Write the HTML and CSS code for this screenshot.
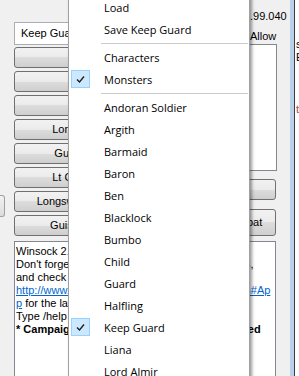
FILE: index.html
```html
<!DOCTYPE html>
<html lang="en">
<head>
<meta charset="UTF-8">
<meta name="viewport" content="width=device-width, initial-scale=1.0">
<title>Campaign Manager</title>
<link rel="stylesheet" href="styles.css">
</head>
<body>
<div class="window">
    <div class="edge">
        <div class="nub"></div>
    </div>
    <div class="main">
        <div class="top">
            <div class="left-col">
                <div class="name">Keep Guard</div>
                <div class="btns">
                    <div class="btn">Orc</div>
                    <div class="btn">Ent</div>
                    <div class="btn">Elf</div>
                    <div class="btn">Lord Almir</div>
                    <div class="btn">Guardian</div>
                    <div class="btn">Lt Colonel</div>
                    <div class="btn">Longswordsman</div>
                    <div class="btn">Guisarmier</div>
                </div>
            </div>
            <div class="right-col">
                <div class="label">.99.040</div>
                <div class="label label-allow">Allow</div>
                <div class="list"></div>
                <div class="btn btn-roll">Roll</div>
                <div class="btn-row">
                    <div class="btn btn-tall">Attack</div>
                    <div class="btn btn-tall btn-combat">Combat</div>
                </div>
            </div>
        </div>
        <div class="log">
            <div class="line">Winsock 2.2 initialized.</div>
            <div class="line">Don't forget to visit the Campaign Manager sites,</div>
            <div class="line">and check the forums regularly at</div>
            <div class="line"><a href="#">http://www.campaignmanager.com/Versions.htm#Ap</a></div>
            <div class="line"><a href="#">p</a> for the latest news and updates.</div>
            <div class="line">Type /help for a list of commands.</div>
            <div class="line bold">* Campaign Logging and Auto-Save is Enabled</div>
        </div>
    </div>
    <div class="gutter"></div>
    <div class="frame"></div>
    <div class="other">
        <div class="row">s</div>
        <div class="row">E</div>
        <div class="row"></div>
        <div class="row"></div>
        <div class="row"></div>
        <div class="row brown">t</div>
    </div>
</div>

<div class="menu">
    <div class="item"><span class="mark"></span>Load</div>
    <div class="item"><span class="mark"></span>Save Keep Guard</div>
    <div class="sep"></div>
    <div class="item"><span class="mark"></span>Characters</div>
    <div class="item"><span class="mark on"><svg width="17" height="16" viewBox="0 0 17 16"><path d="M5 8.5 L7.5 11 L12 5.5" fill="none" stroke="#1a1a1a" stroke-width="1.3"/></svg></span>Monsters</div>
    <div class="sep"></div>
    <div class="item"><span class="mark"></span>Andoran Soldier</div>
    <div class="item"><span class="mark"></span>Argith</div>
    <div class="item"><span class="mark"></span>Barmaid</div>
    <div class="item"><span class="mark"></span>Baron</div>
    <div class="item"><span class="mark"></span>Ben</div>
    <div class="item"><span class="mark"></span>Blacklock</div>
    <div class="item"><span class="mark"></span>Bumbo</div>
    <div class="item"><span class="mark"></span>Child</div>
    <div class="item"><span class="mark"></span>Guard</div>
    <div class="item"><span class="mark"></span>Halfling</div>
    <div class="item"><span class="mark on"><svg width="17" height="16" viewBox="0 0 17 16"><path d="M5 8.5 L7.5 11 L12 5.5" fill="none" stroke="#1a1a1a" stroke-width="1.3"/></svg></span>Keep Guard</div>
    <div class="item"><span class="mark"></span>Liana</div>
    <div class="item"><span class="mark"></span>Lord Almir</div>
</div>
</body>
</html>
```
FILE: styles.css
```css
body {
    margin: 0;
    width: 299px;
    height: 376px;
    overflow: hidden;
    position: relative;
    background-color: #f0f0f0;
    font-family: "Liberation Sans", Arial, sans-serif;
    font-size: 11px;
    color: #000;
}

.window {
    display: flex;
    height: 376px;
}

.edge {
    width: 14px;
    flex: none;
}

.nub {
    margin-top: 195px;
    width: 5px;
    height: 22px;
    box-sizing: border-box;
    border: 1px solid #a0a0a0;
    border-left: none;
    border-radius: 0 3px 3px 0;
    background: linear-gradient(#f2f2f2, #dcdcdc);
}

.main {
    width: 263px;
    flex: none;
}

.top {
    display: grid;
    grid-template-columns: 126px 125px;
    column-gap: 12px;
    align-items: start;
}

.name {
    margin-top: 22px;
    height: 23px;
    box-sizing: border-box;
    border: 1px solid #abadb3;
    background-color: #fff;
    padding: 0 6px;
    line-height: 21px;
    white-space: nowrap;
    overflow: hidden;
}

.btns {
    display: flex;
    flex-direction: column;
    gap: 3px;
    margin-top: 2px;
}

.btn {
    height: 21px;
    box-sizing: border-box;
    border: 1px solid #707070;
    border-radius: 3px;
    background: linear-gradient(#f2f2f2 0%, #ebebeb 50%, #dddddd 50%, #cfcfcf 100%);
    text-align: center;
    line-height: 19px;
    white-space: nowrap;
    overflow: hidden;
}

.right-col {
    padding-top: 10px;
}

.label {
    padding-left: 98px;
    line-height: 13px;
    white-space: nowrap;
}

.label-allow {
    margin-top: 7px;
}

.list {
    margin-top: 1px;
    height: 127px;
    box-sizing: border-box;
    border: 1px solid #828790;
    background-color: #fff;
}

.btn-roll {
    margin-top: 8px;
    margin-right: 1px;
}

.btn-row {
    display: flex;
    gap: 4px;
    margin-top: 9px;
    margin-right: 1px;
}

.btn-tall {
    flex: 1;
    height: 27px;
    line-height: 25px;
}

.btn-combat {
    flex: none;
    width: 66px;
}

.log {
    margin-top: 5px;
    margin-right: 1px;
    height: 140px;
    box-sizing: border-box;
    border: 1px solid #828790;
    border-bottom: none;
    background-color: #fff;
    padding: 3px 1px;
    overflow: hidden;
}

.line {
    line-height: 13px;
    white-space: nowrap;
}

.line a {
    color: #0066cc;
}

.bold {
    font-weight: bold;
}

.gutter {
    width: 13px;
    flex: none;
}

.frame {
    width: 4px;
    flex: none;
    background-color: #b9d1ea;
}

.other {
    width: 4px;
    flex: none;
    border-left: 1px solid #3c3c3c;
    background-color: #fff;
    padding-top: 38px;
    overflow: hidden;
}

.row {
    height: 13px;
    line-height: 13px;
    padding-left: 1px;
}

.brown {
    color: #a0522d;
}

/* popup menu */
.menu {
    position: absolute;
    left: 68px;
    top: -7px;
    width: 182px;
    box-sizing: border-box;
    padding: 2px 0;
    background-color: #fff;
    border: 1px solid #a0a0a0;
    box-shadow: 2px 2px 3px rgba(0, 0, 0, 0.4);
    font-family: "Open Sans", "Noto Sans", sans-serif;
    font-size: 11px;
}

.item {
    display: flex;
    align-items: center;
    height: 22px;
    white-space: nowrap;
}

.mark {
    width: 19px;
    height: 18px;
    margin: 0 14px 0 2px;
    flex: none;
    box-sizing: border-box;
}

.mark.on {
    background-color: #cce8ff;
    border: 1px solid #99d1ff;
}

.mark svg {
    display: block;
}

.sep {
    height: 1px;
    margin: 3px 1px 2px 32px;
    background-color: #ccc;
}
```
